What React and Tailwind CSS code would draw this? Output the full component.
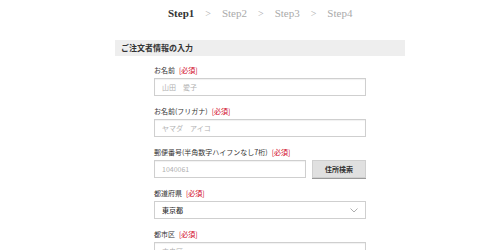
import React from "react";

const jp = { fontFamily: '"Noto Sans CJK JP", "Noto Sans", sans-serif' };

const steps = ["Step1", "Step2", "Step3", "Step4"];

const Label = ({ text, required = true }) => (
  <div className="text-[7px] leading-[9px] text-[#333] mb-[3px]">
    {text}
    {required && <span className="text-[#d0021b] ml-[4px]">[必須]</span>}
  </div>
);

const Field = ({ placeholder, className = "" }) => (
  <input
    readOnly
    placeholder={placeholder}
    className={`block h-[18px] border border-[#cfcfcf] bg-white px-[7px] text-[7px] text-[#333] placeholder:text-[#b0b0b0] outline-none shadow-[inset_0_1px_1px_rgba(0,0,0,0.06)] ${className}`}
    style={jp}
  />
);

const App = () => {
  return (
    <div className="w-[500px] h-[250px] bg-white overflow-hidden" style={jp}>
      <div
        className="flex items-center ml-[168px] h-[26px] text-[11px]"
        style={{ fontFamily: '"Liberation Serif", serif' }}
      >
        {steps.map((s, i) => (
          <React.Fragment key={s}>
            <span className={i === 0 ? "font-bold text-[#333]" : "text-[#aaa]"}>{s}</span>
            {i < steps.length - 1 && (
              <span className="text-[#aaa] text-[10px] mx-[11px]">&gt;</span>
            )}
          </React.Fragment>
        ))}
      </div>

      <div className="ml-[115px] w-[290px] mt-[14px]">
        <div className="h-[16px] bg-[#eeeeee] flex items-center pl-[6px] text-[8px] font-bold text-[#333]">
          ご注文者情報の入力
        </div>

        <div className="w-[212px] mx-auto pt-[10px] flex flex-col gap-[11px]">
          <div>
            <Label text="お名前" />
            <Field placeholder="山田　愛子" className="w-full" />
          </div>
          <div>
            <Label text="お名前(フリガナ)" />
            <Field placeholder="ヤマダ　アイコ" className="w-full" />
          </div>
          <div>
            <Label text="郵便番号(半角数字ハイフンなし7桁)" />
            <div className="flex gap-[6px]">
              <Field placeholder="1040061" className="w-[152px]" />
              <button className="flex-1 h-[18px] bg-[#e0e0e0] border border-[#cfcfcf] shadow-[0_1px_0_#9a9a9a] text-[7px] text-[#333] font-bold">
                住所検索
              </button>
            </div>
          </div>
          <div>
            <Label text="都道府県" />
            <div className="h-[18px] border border-[#cfcfcf] bg-white flex items-center justify-between px-[7px] text-[7px] text-[#333] font-medium">
              <span>東京都</span>
              <svg width="8" height="5" viewBox="0 0 8 5" fill="none">
                <path d="M0.5 0.5 L4 4 L7.5 0.5" stroke="#999" strokeWidth="0.8" />
              </svg>
            </div>
          </div>
          <div>
            <Label text="都市区" />
            <Field placeholder="中央区" className="w-full" />
          </div>
        </div>
      </div>
    </div>
  );
};

export default App;
